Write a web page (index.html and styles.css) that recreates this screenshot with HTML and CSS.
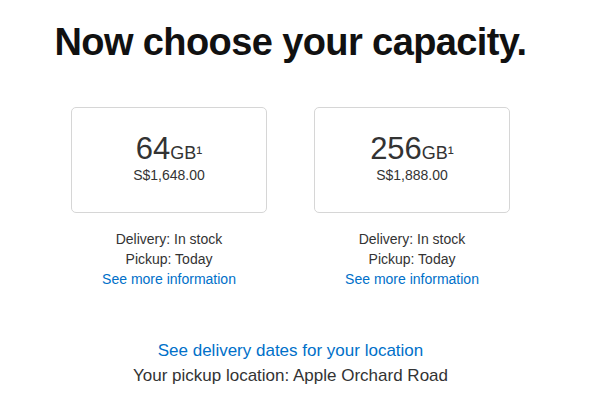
FILE: index.html
```html
<!DOCTYPE html>
<html>
<head>
<meta charset="utf-8">
<link rel="stylesheet" href="styles.css">
</head>
<body>
<main class="page">
  <h1 class="title">Now choose your capacity.</h1>
  <div class="options">
    <div class="option">
      <div class="card">
        <div class="size"><span class="num">64</span><span class="unit">GB¹</span></div>
        <div class="price">S$1,648.00</div>
      </div>
      <div class="info">
        <div>Delivery: In stock</div>
        <div>Pickup: Today</div>
        <a class="link" href="#">See more information</a>
      </div>
    </div>
    <div class="option">
      <div class="card">
        <div class="size"><span class="num">256</span><span class="unit">GB¹</span></div>
        <div class="price">S$1,888.00</div>
      </div>
      <div class="info">
        <div>Delivery: In stock</div>
        <div>Pickup: Today</div>
        <a class="link" href="#">See more information</a>
      </div>
    </div>
  </div>
  <div class="footer">
    <a class="link big" href="#">See delivery dates for your location</a>
    <div class="pickup">Your pickup location: Apple Orchard Road</div>
  </div>
</main>
</body>
</html>
```
FILE: styles.css
```css
html, body { margin: 0; padding: 0; background: #fff; }
body { font-family: "Liberation Sans", Arial, sans-serif; color: #333; }
.page { width: 581px; display: flex; flex-direction: column; align-items: center; }
.title {
  margin: 18px 0 0 0;
  font-size: 38px;
  font-weight: 700;
  line-height: 48px;
  color: #111;
  letter-spacing: -0.6px;
}
.options { display: flex; gap: 47px; margin-top: 41px; }
.option { display: flex; flex-direction: column; align-items: center; width: 196px; }
.card {
  box-sizing: border-box;
  width: 196px; height: 106px;
  border: 1px solid #d6d6d6;
  border-radius: 5px;
  display: flex; flex-direction: column; align-items: center;
  padding-top: 25px;
}
.size { color: #333; line-height: 32px; height: 32px; }
.num { font-size: 31px; }
.unit { font-size: 18px; }
.price { font-size: 14px; line-height: 18px; color: #333; margin-top: 1px; }
.info {
  margin-top: 16px;
  display: flex; flex-direction: column; align-items: center;
  font-size: 14px; line-height: 20px; color: #333;
}
.link { color: #0070c9; text-decoration: none; }
.footer { margin-top: 49px; display: flex; flex-direction: column; align-items: center; font-size: 17px; line-height: 25px; }
.pickup { color: #333; }
```
